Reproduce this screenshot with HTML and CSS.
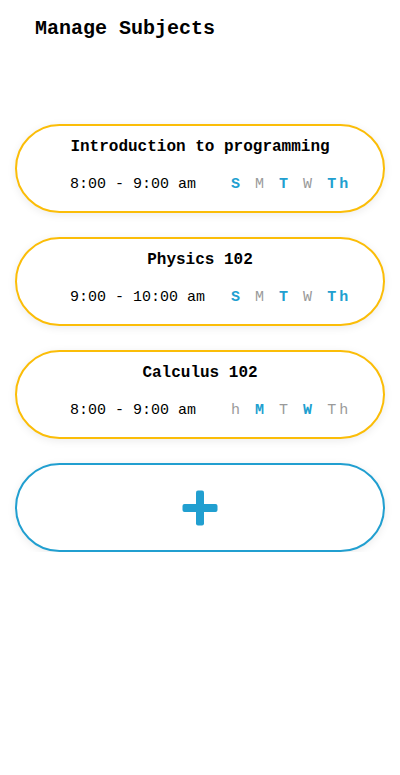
FILE: index.html
```html
<!DOCTYPE html>
<html>
<head>
<meta charset="utf-8">
<link rel="stylesheet" href="styles.css">
</head>
<body>
<div class="page">
  <h1 class="title">Manage Subjects</h1>
  <div class="list">
    <div class="card">
      <div class="card-title">Introduction to programming</div>
      <div class="row">
        <span class="time">8:00 - 9:00 am</span>
        <span class="days"><span class="on">S</span> <span class="off">M</span> <span class="on">T</span> <span class="off">W</span> <span class="on">Th</span></span>
      </div>
    </div>
    <div class="card">
      <div class="card-title">Physics 102</div>
      <div class="row">
        <span class="time">9:00 - 10:00 am</span>
        <span class="days"><span class="on">S</span> <span class="off">M</span> <span class="on">T</span> <span class="off">W</span> <span class="on">Th</span></span>
      </div>
    </div>
    <div class="card">
      <div class="card-title">Calculus 102</div>
      <div class="row">
        <span class="time">8:00 - 9:00 am</span>
        <span class="days"><span class="off">h</span> <span class="on">M</span> <span class="off">T</span> <span class="on">W</span> <span class="off">Th</span></span>
      </div>
    </div>
    <div class="add">
      <svg class="plus" width="36" height="36" viewBox="0 0 36 36">
        <rect x="14" y="0.5" width="8" height="35" rx="2" fill="#219fd0"/>
        <rect x="0.5" y="14" width="35" height="8" rx="2" fill="#219fd0"/>
      </svg>
    </div>
  </div>
</div>
</body>
</html>
```
FILE: styles.css
```css
html, body {
  margin: 0;
  padding: 0;
  background: #fff;
}
.page {
  font-family: "Liberation Mono", "Courier New", monospace;
  color: #000;
  padding: 17px 15px 0 15px;
}
.title {
  margin: 0 0 0 20px;
  font-size: 20px;
  font-weight: bold;
  line-height: 23px;
}
.list {
  margin-top: 84px;
  display: flex;
  flex-direction: column;
  gap: 24px;
}
.card, .add {
  box-sizing: border-box;
  width: 370px;
  height: 89px;
  border: 2px solid #fbbd08;
  border-radius: 45px;
  background: #fff;
  box-shadow: 0 2px 8px rgba(0, 0, 0, 0.08);
}
.card {
  padding-top: 11px;
}
.card-title {
  text-align: center;
  font-size: 16px;
  font-weight: bold;
  line-height: 20px;
}
.row {
  margin-top: 18px;
  display: grid;
  grid-template-columns: 161px auto;
  padding-left: 53px;
  font-size: 15px;
  line-height: 20px;
}
.days {
  letter-spacing: 3px;
  white-space: pre;
}
.on {
  color: #219fd0;
  font-weight: bold;
}
.off {
  color: #9a9a9a;
}
.add {
  border-color: #219fd0;
  display: flex;
  align-items: center;
  justify-content: center;
}
.plus {
  display: block;
  margin-top: 1px;
}
```
